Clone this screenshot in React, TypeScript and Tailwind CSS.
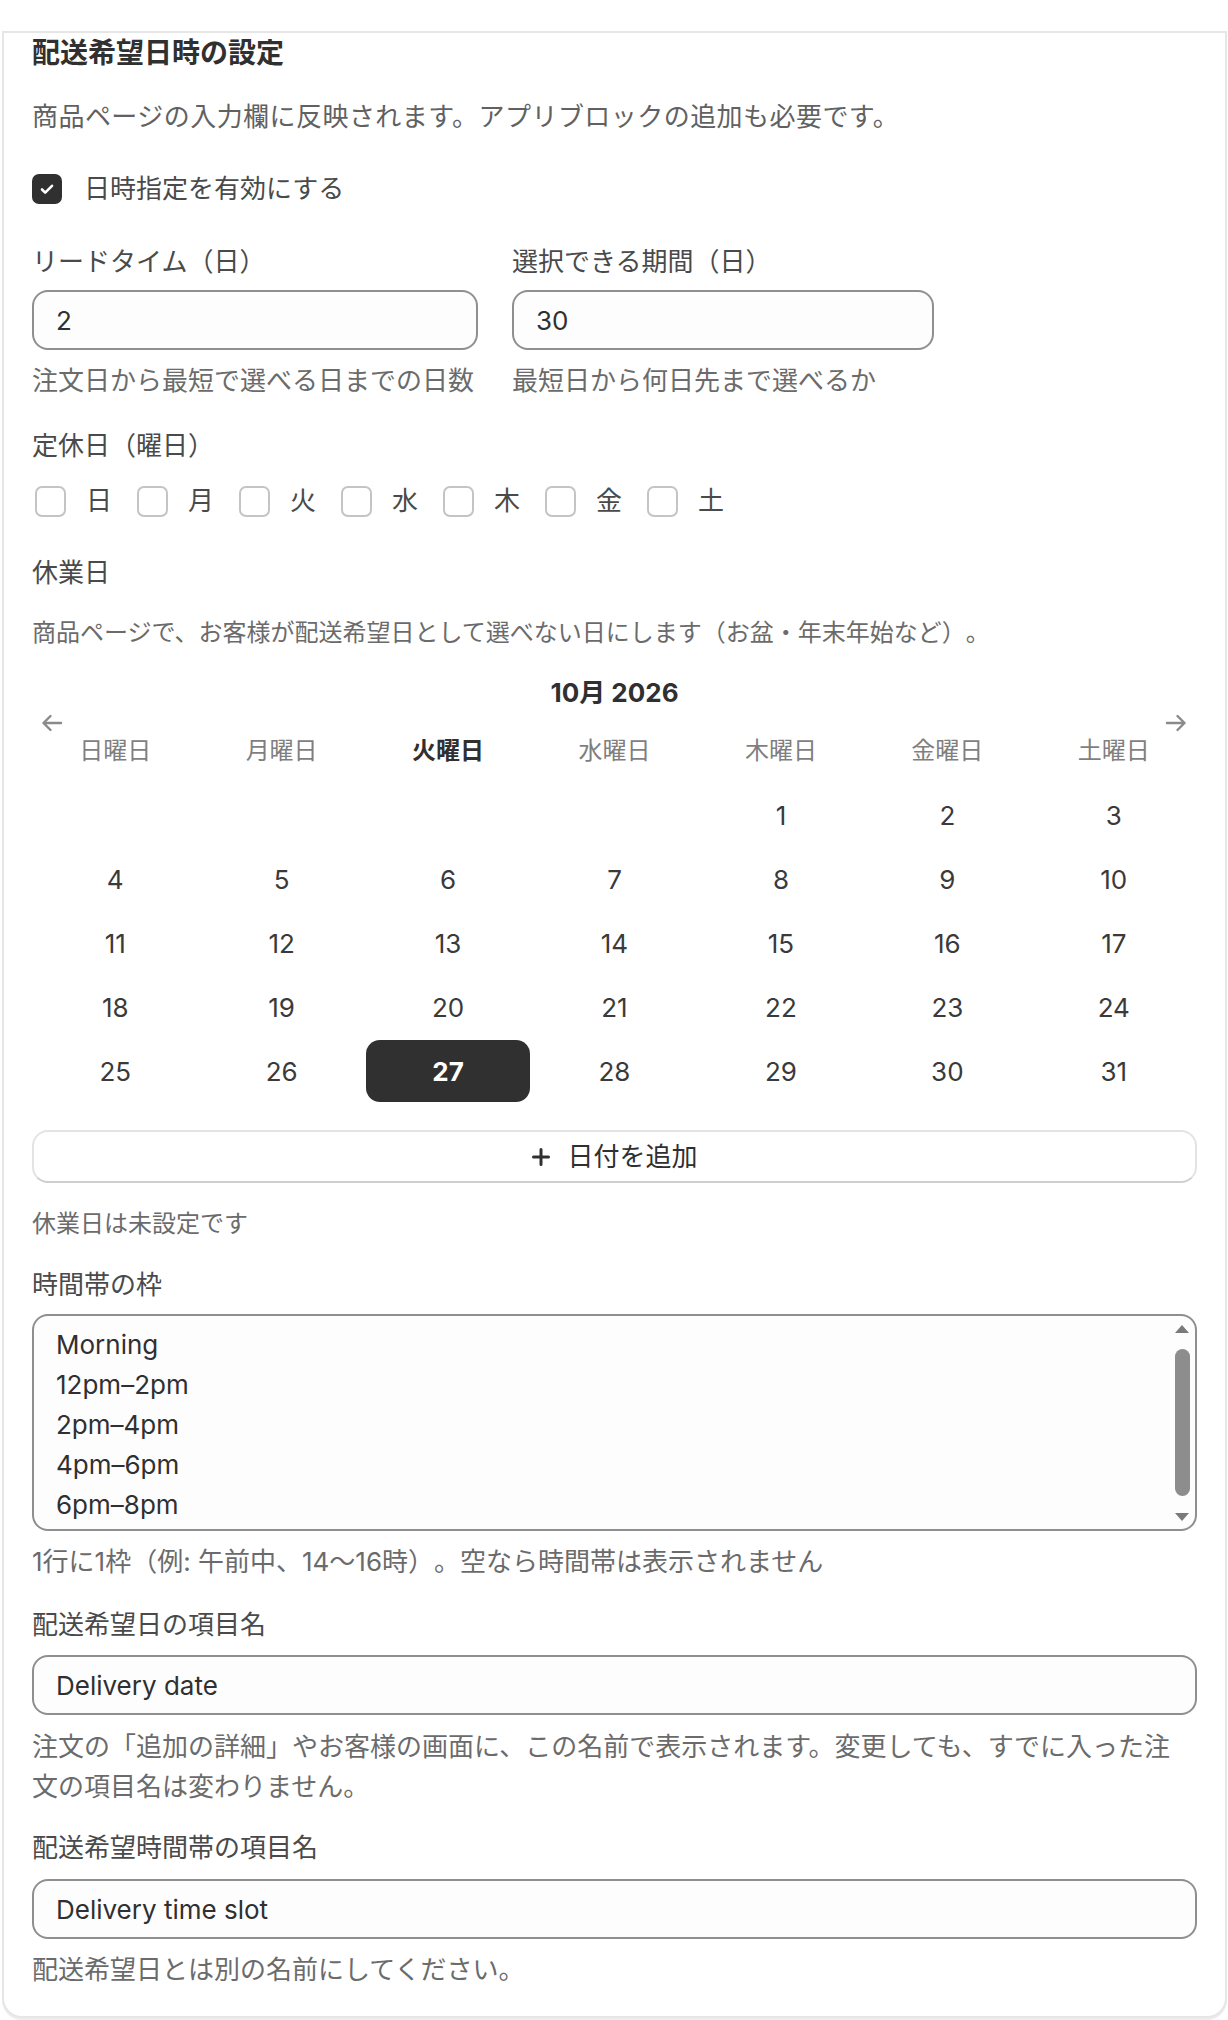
import React from "react";

const WEEKDAYS = ["日曜日", "月曜日", "火曜日", "水曜日", "木曜日", "金曜日", "土曜日"];
const DAY_SHORT = ["日", "月", "火", "水", "木", "金", "土"];
const SLOTS = ["Morning", "12pm–2pm", "2pm–4pm", "4pm–6pm", "6pm–8pm"];

function buildWeeks(): (number | null)[][] {
  // October 2026 starts on a Thursday
  const cells: (number | null)[] = [null, null, null, null];
  for (let d = 1; d <= 31; d++) cells.push(d);
  while (cells.length % 7 !== 0) cells.push(null);
  const weeks: (number | null)[][] = [];
  for (let i = 0; i < cells.length; i += 7) weeks.push(cells.slice(i, i + 7));
  return weeks;
}

function CheckIcon() {
  return (
    <svg width="20" height="20" viewBox="0 0 20 20" fill="none">
      <path d="M5 10.5l3.2 3.2L15 6.8" stroke="#ffffff" strokeWidth="2.6" strokeLinecap="round" strokeLinejoin="round" />
    </svg>
  );
}

function Arrow({ dir }: { dir: "left" | "right" }) {
  return (
    <svg width="26" height="26" viewBox="0 0 26 26" fill="none">
      {dir === "left" ? (
        <path d="M22 13H4.5M11.5 6l-7 7 7 7" stroke="#8a8a8a" strokeWidth="2.4" strokeLinecap="round" strokeLinejoin="round" />
      ) : (
        <path d="M4 13h17.5M14.5 6l7 7-7 7" stroke="#8a8a8a" strokeWidth="2.4" strokeLinecap="round" strokeLinejoin="round" />
      )}
    </svg>
  );
}

function TextInput({ value, className = "" }: { value: string; className?: string }) {
  return (
    <div
      className={`h-[60px] flex items-center rounded-[16px] border-2 border-[#8f8f8f] bg-[#fdfdfd] pl-[22px] text-[26px] text-[#303030] ${className}`}
    >
      {value}
    </div>
  );
}

export default function App() {
  const weeks = buildWeeks();
  return (
    <div className="min-h-[2020px] bg-white font-['Inter','Noto_Sans_CJK_JP',sans-serif] text-[#303030] [text-spacing-trim:space-all]">
      <div className="ml-[2px] mt-[31px] w-[1225px] rounded-b-[20px] border-2 border-[#e6e6e6] bg-white px-[28px] pb-[26px] shadow-[0_2px_0_rgba(0,0,0,0.07)]">
        {/* heading */}
        <h2 className="text-[28px] leading-[40px] font-bold text-[#303030]">配送希望日時の設定</h2>
        <p className="mt-[24px] text-[26px] leading-[40px] tracking-[0.45px] text-[#616161]">
          商品ページの入力欄に反映されます。アプリブロックの追加も必要です。
        </p>

        {/* enable toggle */}
        <label className="mt-[32px] flex h-[40px] items-center">
          <span className="flex h-[30px] w-[30px] items-center justify-center rounded-[7px] bg-[#303030]">
            <CheckIcon />
          </span>
          <span className="ml-[22px] text-[26px] leading-[40px] text-[#4a4a4a]">日時指定を有効にする</span>
        </label>

        {/* lead time / range */}
        <div className="mt-[33px] flex gap-[34px]">
          <div className="w-[446px]">
            <div className="text-[26px] leading-[40px] text-[#4a4a4a]">リードタイム（日）</div>
            <TextInput value="2" className="mt-[8px]" />
            <div className="mt-[11px] text-[26px] leading-[40px] text-[#6b6b6b] whitespace-nowrap">注文日から最短で選べる日までの日数</div>
          </div>
          <div className="w-[422px]">
            <div className="text-[26px] leading-[40px] text-[#4a4a4a]">選択できる期間（日）</div>
            <TextInput value="30" className="mt-[8px]" />
            <div className="mt-[11px] text-[26px] leading-[40px] text-[#6b6b6b] whitespace-nowrap">最短日から何日先まで選べるか</div>
          </div>
        </div>

        {/* weekly closed days */}
        <div className="mt-[25px] text-[26px] leading-[40px] text-[#4a4a4a]">定休日（曜日）</div>
        <div className="mt-[15px] flex h-[40px] items-center gap-[25px] pl-[3px]">
          {DAY_SHORT.map((d) => (
            <label key={d} className="flex items-center">
              <span className="h-[31px] w-[31px] rounded-[7px] border-2 border-[#c4c4c4] bg-white" />
              <span className="ml-[20px] w-[26px] text-[26px] leading-[40px] text-[#4a4a4a]">{d}</span>
            </label>
          ))}
        </div>

        {/* holidays */}
        <div className="mt-[32px] text-[26px] leading-[40px] text-[#4a4a4a]">休業日</div>
        <p className="mt-[20px] text-[24px] leading-[40px] text-[#6b6b6b]">
          商品ページで、お客様が配送希望日として選べない日にします（お盆・年末年始など）。
        </p>

        {/* calendar */}
        <div className="relative mt-[20px]">
          <div className="text-center text-[26px] leading-[40px] font-bold text-[#303030]">10月 2026</div>
          <button className="absolute left-[7px] top-[37px]" aria-label="前の月">
            <Arrow dir="left" />
          </button>
          <button className="absolute right-[8px] top-[37px]" aria-label="次の月">
            <Arrow dir="right" />
          </button>
          <div className="mt-[18px] grid grid-cols-7">
            {WEEKDAYS.map((w, i) => (
              <div
                key={w}
                className={`text-center text-[24px] leading-[40px] ${i === 2 ? "font-bold text-[#303030]" : "text-[#7f7f7f]"}`}
              >
                {w}
              </div>
            ))}
          </div>
          <div className="mt-[13px] flex flex-col gap-[2px]">
            {weeks.map((week, wi) => (
              <div key={wi} className="grid grid-cols-7">
                {week.map((d, di) =>
                  d === null ? (
                    <div key={di} className="h-[62px]" />
                  ) : d === 27 ? (
                    <div
                      key={di}
                      className="mx-[1px] flex h-[62px] items-center justify-center rounded-[14px] bg-[#303030] text-[26px] font-bold text-white"
                    >
                      {d}
                    </div>
                  ) : (
                    <div key={di} className="flex h-[62px] items-center justify-center text-[26px] text-[#3a3a3a]">
                      {d}
                    </div>
                  )
                )}
              </div>
            ))}
          </div>
        </div>

        {/* add date */}
        <button className="mt-[28px] flex h-[53px] w-full items-center justify-center gap-[16px] rounded-[16px] border-2 border-[#e3e3e3] border-b-[#cfcfcf] bg-white text-[26px] text-[#303030]">
          <svg width="20" height="20" viewBox="0 0 20 20" fill="none">
            <path d="M10 2.5v15M2.5 10h15" stroke="#303030" strokeWidth="3" strokeLinecap="round" />
          </svg>
          <span>日付を追加</span>
        </button>
        <div className="mt-[21px] text-[24px] leading-[40px] text-[#6b6b6b]">休業日は未設定です</div>

        {/* time slots */}
        <div className="mt-[21px] text-[26px] leading-[40px] text-[#4a4a4a]">時間帯の枠</div>
        <div className="relative mt-[9px] h-[217px] overflow-hidden rounded-[16px] border-2 border-[#8f8f8f] bg-[#fdfdfd] pl-[22px] pt-[9px]">
          {SLOTS.map((s) => (
            <div key={s} className="text-[26px] leading-[40px] text-[#303030]">
              {s}
            </div>
          ))}
          {/* scrollbar */}
          <div className="absolute bottom-[4px] right-[3px] top-[4px] flex w-[20px] flex-col items-center">
            <svg width="18" height="16" viewBox="0 0 18 16" className="mt-[1px]">
              <path d="M9 4l7 8H2z" fill="#7a7a7a" />
            </svg>
            <div className="mt-[12px] h-[147px] w-[15px] rounded-full bg-[#8d8d8d]" />
            <svg width="18" height="16" viewBox="0 0 18 16" className="mt-auto">
              <path d="M9 12L2 4h14z" fill="#7a7a7a" />
            </svg>
          </div>
        </div>
        <div className="mt-[11px] text-[26px] leading-[40px] text-[#6b6b6b]">
          1行に1枠（例: 午前中、14〜16時）。空なら時間帯は表示されません
        </div>

        {/* field names */}
        <div className="mt-[23px] text-[26px] leading-[40px] text-[#4a4a4a]">配送希望日の項目名</div>
        <TextInput value="Delivery date" className="mt-[10px]" />
        <p className="mt-[12px] text-[26px] leading-[40px] text-[#6b6b6b]">
          注文の「追加の詳細」やお客様の画面に、この名前で表示されます。変更しても、すでに入った注
          <br />
          文の項目名は変わりません。
        </p>

        <div className="mt-[21px] text-[26px] leading-[40px] text-[#4a4a4a]">配送希望時間帯の項目名</div>
        <TextInput value="Delivery time slot" className="mt-[11px]" />
        <div className="mt-[11px] text-[26px] leading-[40px] text-[#6b6b6b]">配送希望日とは別の名前にしてください。</div>
      </div>
    </div>
  );
}
